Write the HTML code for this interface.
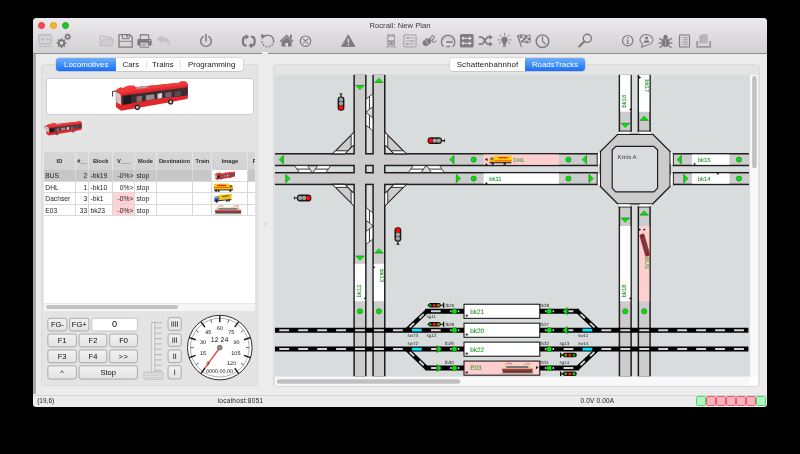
<!DOCTYPE html>
<html><head><meta charset="utf-8"><title>Rocrail: New Plan</title><style>
*{box-sizing:border-box;margin:0;padding:0}
html,body{width:800px;height:454px;background:#000;overflow:hidden}
body{font-family:"Liberation Sans",sans-serif;position:relative;color:#222}
.a{position:absolute}
svg text{text-rendering:geometricPrecision}
#root{left:0;top:0;width:800px;height:454px;will-change:transform}
#win{left:33px;top:18.3px;width:734px;height:388.3px;background:#ececec;border-radius:4px 4px 3px 3px;overflow:hidden}
#tbar{left:33px;top:18.3px;width:734px;height:35.9px;background:linear-gradient(#ebe9eb,#d2d0d2);border-bottom:1.5px solid #8e8e8e;border-radius:4px 4px 0 0}
#title{left:33px;width:734px;top:21.2px;text-align:center;font-size:7.7px;color:#3c3c3c}
.tl{width:7.4px;height:7.4px;border-radius:50%;top:21.9px}
#lstrip{left:33px;top:53.7px;width:2.6px;height:340px;background:#a9a9a9}
.gbox{background:#e4e4e4;border:0.8px solid #dadada;border-radius:3px}
.segbox{top:58.4px;height:12.6px;background:#fff;border-radius:3px;box-shadow:0 0 0 0.5px #c6c6c6, 0 0.6px 0.5px #b0b0b0}
.seg{height:12.6px;top:58.4px;font-size:7.9px;line-height:13.6px;text-align:center;color:#1a1a1a;white-space:nowrap}
.seg.sel{background:linear-gradient(#6cb0fc,#1a6ff6);color:#fff}
.seg.first{border-radius:3px 0 0 3px}
.seg.selr{border-radius:0 3px 3px 0}
.sdiv{top:60.4px;width:0.6px;height:8.6px;background:#e6e6e6}

#imgbox{left:45.6px;top:78.4px;width:208px;height:36.6px;background:#fff;border:0.7px solid #cdcdcd;border-radius:3px}
#tbl{left:44.3px;top:152.4px;width:211.2px;height:150.6px;background:#fff;overflow:hidden}
.th{top:0;height:18.1px;background:linear-gradient(#d7d7d7,#d2d2d2);font-size:5.7px;font-weight:bold;color:#2a2a2a;text-align:center;line-height:18.6px;border-right:0.8px solid #e4e4e4;overflow:hidden;white-space:nowrap}
.tr{left:0;width:211.2px;height:11.35px;border-bottom:0.6px solid #dadada}
.td{top:0;height:10.8px;font-size:6.7px;line-height:11.2px;color:#1c1c1c;white-space:nowrap;overflow:hidden;border-right:0.6px solid #d8d8d8}
.bt{text-align:center;color:#0c0c0c;white-space:nowrap}
.sb{background:#c2c2c2;border-radius:2.5px}
#status{left:33px;top:394.6px;width:734px;height:12px;border-top:0.7px solid #d4d4d4;font-size:6.4px;color:#222}
.led{top:396.1px;width:9.6px;height:9.5px;border-radius:1.6px}
</style></head><body><div id="root" class="a">
<div id="win" class="a"></div>
<div id="tbar" class="a"></div>
<div class="a tl" style="left:37.8px;background:#fc4a4e;border:0.4px solid #df3d40"></div>
<div class="a tl" style="left:49.6px;background:#fdb524;border:0.4px solid #de9b1c"></div>
<div class="a tl" style="left:61.5px;background:#28c231;border:0.4px solid #1da824"></div>
<div id="title" class="a">Rocrail: New Plan</div>
<div id="lstrip" class="a"></div>
<svg class="a" style="left:0;top:0" width="800" height="454" viewBox="0 0 800 454" fill="none" stroke-linecap="round" stroke-linejoin="round">
<rect x="38.9" y="34.7" width="12.4" height="9" rx="1" fill="#d6d4d6" stroke="#bebebe" stroke-width="1.4"/>
<path d="M39.2 46.7 H51 M45.1 44 V46.4" stroke="#bebebe" stroke-width="1.0"/>
<path d="M40.6 39.2 l2 -1.8 l1.5 1.8 l-1.5 1.8 z M46 39.2 l1.5 -1.8 l2 1.8 l-2 1.8 z" fill="#bcbcbc"/>
<polygon points="66.37,42.57 66.37,43.63 65.05,44.14 64.75,44.88 65.32,46.17 64.57,46.92 63.28,46.35 62.54,46.65 62.03,47.97 60.97,47.97 60.46,46.65 59.72,46.35 58.43,46.92 57.68,46.17 58.25,44.88 57.95,44.14 56.63,43.63 56.63,42.57 57.95,42.06 58.25,41.32 57.68,40.03 58.43,39.28 59.72,39.85 60.46,39.55 60.97,38.23 62.03,38.23 62.54,39.55 63.28,39.85 64.57,39.28 65.32,40.03 64.75,41.32 65.05,42.06" fill="#7c7c7c"/><circle cx="61.5" cy="43.1" r="1.75" fill="#e0dee0"/>
<polygon points="71.18,36.42 71.18,37.18 70.20,37.53 69.98,38.05 70.43,38.99 69.89,39.53 68.95,39.08 68.43,39.30 68.08,40.28 67.32,40.28 66.97,39.30 66.45,39.08 65.51,39.53 64.97,38.99 65.42,38.05 65.20,37.53 64.22,37.18 64.22,36.42 65.20,36.07 65.42,35.55 64.97,34.61 65.51,34.07 66.45,34.52 66.97,34.30 67.32,33.32 68.08,33.32 68.43,34.30 68.95,34.52 69.89,34.07 70.43,34.61 69.98,35.55 70.20,36.07" fill="#7c7c7c"/><circle cx="67.7" cy="36.8" r="1.15" fill="#e0dee0"/>
<path d="M100.3 45.6 V36.6 q0 -0.6 0.6 -0.6 h3.6 l1.2 1.5 h5.2 q0.6 0 0.6 0.6 v1.4" stroke="#c0c0c0" stroke-width="1.3"/>
<path d="M100.4 45.7 l2.4 -6 h10.8 l-2.4 6 z" fill="#d0ced0" stroke="#c0c0c0" stroke-width="1.3"/>
<path d="M119 34.6 h10.8 l2.4 2.4 v10 h-13.2 z" stroke="#7c7c7c" stroke-width="1.25"/>
<path d="M122.4 34.8 v3.9 h6.8 v-3.9" stroke="#7c7c7c" stroke-width="1.0"/><rect x="126.2" y="35" width="1.5" height="2.6" fill="#7c7c7c"/>
<path d="M119.3 41.3 h12.6" stroke="#7c7c7c" stroke-width="0.9"/>
<rect x="140.3" y="34.9" width="8.4" height="4.6" stroke="#7c7c7c" stroke-width="1.1"/>
<rect x="137.3" y="38.9" width="14.3" height="6.6" rx="1.2" fill="#7c7c7c"/>
<rect x="140.4" y="42.2" width="8.2" height="5.1" fill="#e0dee0" stroke="#7c7c7c" stroke-width="0.9"/>
<path d="M141.8 44 h5.2 M141.8 45.6 h3.6" stroke="#7c7c7c" stroke-width="0.7"/><circle cx="149.7" cy="40.6" r="0.7" fill="#e0dee0"/>
<path d="M156.6 38.6 l5.6 -3.7 v2.4 q8 0 8.4 8.9 q-2.4 -4.6 -8.4 -4.3 v2.4 z" fill="#c4c4c4"/>
<path d="M203.2 36.6 A5.3 5.3 0 1 0 208.8 36.6" stroke="#7c7c7c" stroke-width="1.45"/><path d="M206 34.4 V41" stroke="#7c7c7c" stroke-width="1.5"/>
<path d="M246.6 45.6 h-0.6 q-3 0 -3 -3 v-2.8 q0 -3 3 -3 h0.2" stroke="#7c7c7c" stroke-width="2.2" stroke-linecap="butt"/>
<path d="M251 36.8 h0.6 q3 0 3 3 v2.8 q0 3 -3 3 h-0.2" stroke="#7c7c7c" stroke-width="2.2" stroke-linecap="butt"/>
<path d="M245.6 33.9 l3.6 2.9 l-3.6 2.9 z M252 42.7 l-3.6 2.9 l3.6 2.9 z" fill="#7c7c7c"/>
<path d="M263.6 37 A5.8 5.8 0 0 1 273.6 41.2" stroke="#7c7c7c" stroke-width="1.4"/>
<path d="M273.6 41.2 A5.8 5.8 0 1 1 262.2 39.6" stroke="#7c7c7c" stroke-width="1.4" stroke-dasharray="1.8 1.4" stroke-linecap="butt"/>
<path d="M260.7 33.9 l5 1.5 l-3.9 3.9 z" fill="#7c7c7c"/>
<path d="M279.6 41.3 l7 -6.8 l7 6.8 l-0.9 0.9 l-6.1 -5.9 l-6.1 5.9 z" fill="#7c7c7c"/>
<path d="M281.6 41.6 l5 -4.8 l5 4.8 v5 h-10 z" fill="#7c7c7c"/><rect x="285.4" y="43" width="2.6" height="3.6" fill="#dcdadc"/>
<rect x="290" y="34.6" width="1.8" height="3.6" fill="#7c7c7c"/>
<circle cx="305.5" cy="41.2" r="5.2" stroke="#7c7c7c" stroke-width="1.2"/><path d="M303.5 39.2 l4 4 M307.5 39.2 l-4 4" stroke="#7c7c7c" stroke-width="1.2"/>
<path d="M348.4 35.2 l6.6 11.2 h-13.2 z" fill="#7c7c7c" stroke="#7c7c7c" stroke-width="0.9"/><path d="M348.4 38.8 v3.8" stroke="#e2e0e2" stroke-width="1.5" stroke-linecap="butt"/><circle cx="348.4" cy="44.6" r="0.85" fill="#e2e0e2"/>
<path d="M387.2 35.8 q0 -1.8 1.8 -1.8 h4.2 q1.8 0 1.8 1.8 v8.4 q0 1 -1 1 h-5.8 q-1 0 -1 -1 z" fill="#9b9b9b"/>
<rect x="388.3" y="36.6" width="5.6" height="3.6" rx="0.5" fill="#dedcde"/><circle cx="388.9" cy="43" r="0.7" fill="#dedcde"/><circle cx="393.3" cy="43" r="0.7" fill="#dedcde"/>
<path d="M388.4 45.4 l-1.8 2.3 M393.8 45.4 l1.8 2.3 M387.4 46.8 h7.4" stroke="#9b9b9b" stroke-width="0.9"/><rect x="389.4" y="34.4" width="3.4" height="0.9" fill="#dedcde"/>
<rect x="403.7" y="34.9" width="12.4" height="12" rx="1" stroke="#a2a2a2" stroke-width="1"/>
<path d="M405.6 37.9 h8.6" stroke="#a2a2a2" stroke-width="0.8"/><circle cx="408" cy="37.9" r="1" fill="#a2a2a2"/>
<path d="M405.6 40.9 h8.6" stroke="#a2a2a2" stroke-width="0.8"/><circle cx="411.6" cy="40.9" r="1" fill="#a2a2a2"/>
<path d="M405.6 43.9 h8.6" stroke="#a2a2a2" stroke-width="0.8"/><circle cx="407.4" cy="43.9" r="1" fill="#a2a2a2"/>
<ellipse cx="427" cy="42" rx="4.9" ry="3.4" transform="rotate(-35 427 42)" fill="#7c7c7c"/>
<path d="M424.6 39.4 l4.2 4.8 M427.6 38 l1 1.4" stroke="#dedcde" stroke-width="0.7"/>
<path d="M430.4 38.4 q1.2 -3.4 3.2 -2.4 q1.8 1.2 -0.6 3.2 q-1.8 1.8 0.2 2.8 q1.6 0.6 2.6 -1" stroke="#7c7c7c" stroke-width="1.05"/>
<path d="M443.2 46.4 A6.7 6.7 0 1 1 453 46.4" stroke="#7c7c7c" stroke-width="1.3"/>
<path d="M447.4 42 h5" stroke="#7c7c7c" stroke-width="1.3"/><circle cx="447.6" cy="42" r="1.1" fill="#7c7c7c"/><rect x="446.3" y="45.9" width="3.8" height="1.3" fill="#7c7c7c"/>
<path d="M443.42 39.30 L444.12 39.70" stroke="#7c7c7c" stroke-width="0.6"/>
<path d="M445.40 37.32 L445.80 38.02" stroke="#7c7c7c" stroke-width="0.6"/>
<path d="M448.10 36.60 L448.10 37.40" stroke="#7c7c7c" stroke-width="0.6"/>
<path d="M450.80 37.32 L450.40 38.02" stroke="#7c7c7c" stroke-width="0.6"/>
<path d="M452.78 39.30 L452.08 39.70" stroke="#7c7c7c" stroke-width="0.6"/>
<rect x="459.9" y="33.9" width="13.8" height="13.7" rx="1.6" fill="#808080"/>
<path d="M462.4 38.3 h8.6 M462.4 43.3 h8.6" stroke="#e4e2e4" stroke-width="1"/>
<rect x="461.9" y="37.2" width="2.2" height="2.2" fill="#e4e2e4"/><rect x="461.9" y="42.2" width="2.2" height="2.2" fill="#e4e2e4"/><path d="M469 36.4 l2.6 1.9 l-2.6 1.9 z M469 41.4 l2.6 1.9 l-2.6 1.9 z" fill="#e4e2e4"/>
<path d="M478.8 37.2 h2.2 q1.6 0 2.6 1.6 l2.4 3.8 q1 1.6 2.6 1.6 h1.4" stroke="#7c7c7c" stroke-width="1.75" stroke-linecap="butt"/>
<path d="M478.8 44.2 h2.2 q1.6 0 2.6 -1.6 l2.4 -3.8 q1 -1.6 2.6 -1.6 h1.4" stroke="#7c7c7c" stroke-width="1.75" stroke-linecap="butt"/>
<path d="M489.4 34.6 l3.4 2.6 l-3.4 2.6 z M489.4 41.6 l3.4 2.6 l-3.4 2.6 z" fill="#7c7c7c"/>
<circle cx="504.5" cy="39.9" r="3.1" fill="#7c7c7c"/><rect x="503" y="42.4" width="3" height="3.2" fill="#7c7c7c"/><path d="M503.2 46.6 h2.6" stroke="#7c7c7c" stroke-width="0.8"/>
<path d="M504.50 35.30 L504.50 33.30" stroke="#7c7c7c" stroke-width="0.85"/>
<path d="M507.75 36.65 L509.17 35.23" stroke="#7c7c7c" stroke-width="0.85"/>
<path d="M501.25 36.65 L499.83 35.23" stroke="#7c7c7c" stroke-width="0.85"/>
<path d="M509.10 39.90 L511.10 39.90" stroke="#7c7c7c" stroke-width="0.85"/>
<path d="M499.90 39.90 L497.90 39.90" stroke="#7c7c7c" stroke-width="0.85"/>
<path d="M508.27 42.54 L509.91 43.69" stroke="#7c7c7c" stroke-width="0.85"/>
<path d="M500.73 42.54 L499.09 43.69" stroke="#7c7c7c" stroke-width="0.85"/>
<path d="M517.6 35.6 l3.8 11.2" stroke="#7c7c7c" stroke-width="1.1"/>
<path d="M518.4 35.4 q3 -1.6 5.8 -0.2 q3 1.4 5.8 -0.4 l0.4 7 q-2.8 1.8 -5.8 0.4 q-2.8 -1.4 -4 0.2 z" stroke="#7c7c7c" stroke-width="0.9" fill="#dcdadc"/>
<path d="M519.4 35.8 l2.6 -0.8 l0.7 2.4 l-2.6 0.8 z M524.6 35.8 l2.6 0.2 l0.2 2.4 l-2.6 -0.2 z M522.8 37.6 l2.4 0.4 l0.4 2.4 l-2.4 -0.4 z M527.6 38.2 l2.4 -0.6 l0.2 2.4 l-2.4 0.6 z M521 40.4 l2.4 -0.6 l0.6 2.2 l-2.4 0.6 z M525.4 40.6 l2.4 0.4 l0.2 2 l-2.4 -0.4 z" fill="#7c7c7c"/>
<circle cx="542.5" cy="41.2" r="6.3" stroke="#7c7c7c" stroke-width="1.4"/><path d="M542.5 36.8 V41.4 L545.4 44" stroke="#7c7c7c" stroke-width="1.15"/>
<circle cx="587.3" cy="38.3" r="4.1" stroke="#7c7c7c" stroke-width="1.35"/><path d="M584.2 41.6 L579.2 46.4" stroke="#7c7c7c" stroke-width="2.1"/>
<circle cx="627.7" cy="40.7" r="5.2" stroke="#7c7c7c" stroke-width="1.2"/><path d="M627.7 40 v3.4" stroke="#7c7c7c" stroke-width="1.2" stroke-linecap="butt"/><circle cx="627.7" cy="38" r="0.8" fill="#7c7c7c"/><path d="M626.6 43.5 h2.2 M626.8 39.9 h0.9" stroke="#7c7c7c" stroke-width="0.6"/>
<path d="M642.6 44.2 A6.5 5.3 0 1 1 646 45.2 L641.6 47.2 Z" stroke="#7c7c7c" stroke-width="1.05" fill="#dedcde"/>
<circle cx="646.6" cy="38" r="1.6" fill="#7c7c7c"/><path d="M643.6 42.8 q0 -2.6 3 -2.6 q3 0 3 2.6 z" fill="#7c7c7c"/>
<ellipse cx="665.5" cy="42.4" rx="4" ry="4.6" fill="#7c7c7c"/><path d="M662.9 37.8 q2.6 -3.8 5.2 0 z" fill="#7c7c7c"/><circle cx="665.5" cy="36.6" r="1.9" fill="#7c7c7c"/>
<path d="M662.4 40.6 l-2.8 -2.2 M668.6 40.6 l2.8 -2.2 M662 43 h-3 M669 43 h3 M662.6 45.2 l-2.6 2.2 M668.4 45.2 l2.6 2.2 M665.5 39.6 v7" stroke="#7c7c7c" stroke-width="1.25"/>
<path d="M665.5 39.6 v7" stroke="#cfcdcf" stroke-width="0.5"/>
<rect x="679.5" y="35" width="10" height="12" rx="0.8" stroke="#7c7c7c" stroke-width="1.15"/>
<path d="M681.4 37.6 h0.8 M683.4 37.6 h4.2" stroke="#7c7c7c" stroke-width="0.75" stroke-linecap="butt"/>
<path d="M681.4 39.8 h0.8 M683.4 39.8 h4.2" stroke="#7c7c7c" stroke-width="0.75" stroke-linecap="butt"/>
<path d="M681.4 42 h0.8 M683.4 42 h4.2" stroke="#7c7c7c" stroke-width="0.75" stroke-linecap="butt"/>
<path d="M681.4 44.2 h0.8 M683.4 44.2 h4.2" stroke="#7c7c7c" stroke-width="0.75" stroke-linecap="butt"/>
<path d="M699.4 43.6 V36 l2.6 -1.8 h5.6 v9.4 z" fill="#b2b0b2"/><path d="M702 34.2 v9.4 M704 34.2 v9.4 M706 34.2 v9.4" stroke="#c8c6c8" stroke-width="0.5"/>
<path d="M697.2 41 v5.8 h13 v-5.8" stroke="#999" stroke-width="1.8" stroke-linecap="butt" stroke-linejoin="miter"/>
</svg>
<div class="a gbox" style="left:41.3px;top:64px;width:217px;height:321.5px"></div>
<div class="a gbox" style="left:273px;top:64px;width:487px;height:323px"></div>
<div class="a" style="left:263.5px;top:222.5px;width:2.6px;height:2.6px;border-radius:50%;background:#d6d6d6;border:0.4px solid #c4c4c4"></div>
<div class="a" style="left:262.3px;top:52.2px;width:5.5px;height:2px;background:#f4f4f4;border-radius:1px"></div>
<div class="a segbox" style="left:56.2px;width:187px"></div>
<div class="a seg sel first" style="left:56.2px;width:60px">Locomotives</div>
<div class="a seg " style="left:116.2px;width:29.3px">Cars</div>
<div class="a seg " style="left:145.5px;width:34.7px">Trains</div>
<div class="a seg " style="left:180.2px;width:63px">Programming</div>
<div class="a sdiv" style="left:145.5px"></div>
<div class="a sdiv" style="left:180.2px"></div>
<div class="a segbox" style="left:450px;width:135px"></div>
<div class="a seg " style="left:450px;width:75px"><span style="letter-spacing:0.13px">Schattenbahnhof</span></div>
<div class="a seg sel selr" style="left:525px;width:60px">RoadsTracks</div>
<div id="imgbox" class="a"></div>
<svg class="a" style="left:110.5px;top:81.2px" width="77.5" height="31" viewBox="0 0 100 40" >
<polygon points="6,12 12,8.5 16,9 22,6.2 30,6.2 31,8 88,2.2 90,0.8 96,0.6 98,2.4 99.5,5.5 99,23 76,27.5 30,35.5 13,38.5 6.5,34" fill="#e3262a"/>
<polygon points="6,12 12,8.5 16,9 22,6.2 30,6.2 31,8 88,2.2 90,0.8 96,0.6 98,2.4 99,5 60,9 30,13 13,16" fill="#ee3a3a"/>
<polygon points="33,7.6 47,6.2 47,8.8 33,10.2" fill="#b8a0a8"/>
<polygon points="14,18.6 99,8 99,18.6 62,22.6 30,28 14,31" fill="#3a2e33"/>
<polygon points="6.3,14 12.5,17.5 13,31 7,27.5" fill="#c8cdd2"/>
<polygon points="33,20 40,19 40,26 33,27" fill="#8a6a70"/>
<polygon points="45,18.5 56,17 56,23.5 45,25" fill="#9c8a90"/>
<polygon points="60,16.3 66,15.6 66,22 60,22.8" fill="#d8d4d8"/>
<polygon points="70,15 78,14 78,20.5 70,21.5" fill="#7a6066"/>
<polygon points="82,13.5 90,12.6 90,19 82,20" fill="#5a4a50"/>
<polygon points="16,20 26,18.5 26,29 16,30.8" fill="#1c1c20"/>
<circle cx="34" cy="34" r="3.6" fill="#26262a"/><circle cx="34" cy="34" r="1.8" fill="#c9c9cf"/>
<circle cx="77" cy="27" r="3.4" fill="#26262a"/><circle cx="77" cy="27" r="1.7" fill="#c9c9cf"/>
<path d="M6,13 L2,13.5 L2,20" stroke="#222" stroke-width="1.2" fill="none"/>
</svg>
<svg class="a" style="left:44px;top:121.2px" width="38" height="15.2" viewBox="0 0 100 40" >
<polygon points="6,12 12,8.5 16,9 22,6.2 30,6.2 31,8 88,2.2 90,0.8 96,0.6 98,2.4 99.5,5.5 99,23 76,27.5 30,35.5 13,38.5 6.5,34" fill="#e3262a"/>
<polygon points="6,12 12,8.5 16,9 22,6.2 30,6.2 31,8 88,2.2 90,0.8 96,0.6 98,2.4 99,5 60,9 30,13 13,16" fill="#ee3a3a"/>
<polygon points="33,7.6 47,6.2 47,8.8 33,10.2" fill="#b8a0a8"/>
<polygon points="14,18.6 99,8 99,18.6 62,22.6 30,28 14,31" fill="#4a3a40"/>
<polygon points="6.3,14 12.5,17.5 13,31 7,27.5" fill="#c8cdd2"/>
<polygon points="33,20 40,19 40,26 33,27" fill="#8a6a70"/>
<polygon points="45,18.5 56,17 56,23.5 45,25" fill="#9c8a90"/>
<polygon points="60,16.3 66,15.6 66,22 60,22.8" fill="#d8d4d8"/>
<polygon points="70,15 78,14 78,20.5 70,21.5" fill="#7a6066"/>
<polygon points="82,13.5 90,12.6 90,19 82,20" fill="#5a4a50"/>
<polygon points="16,20 26,18.5 26,29 16,30.8" fill="#1c1c20"/>
<circle cx="34" cy="34" r="3.6" fill="#26262a"/><circle cx="34" cy="34" r="1.8" fill="#c9c9cf"/>
<circle cx="77" cy="27" r="3.4" fill="#26262a"/><circle cx="77" cy="27" r="1.7" fill="#c9c9cf"/>
<path d="M6,13 L2,13.5 L2,20" stroke="#222" stroke-width="1.2" fill="none"/>
</svg>
<div id="tbl" class="a">
<div class="a th" style="left:0.0px;width:31.3px">ID</div>
<div class="a th" style="left:31.3px;width:13.9px">#__</div>
<div class="a th" style="left:45.2px;width:23.4px">Block</div>
<div class="a th" style="left:68.6px;width:22.6px">V___</div>
<div class="a th" style="left:91.2px;width:21.1px">Mode</div>
<div class="a th" style="left:112.3px;width:36.7px">Destination</div>
<div class="a th" style="left:149.0px;width:19.2px">Train</div>
<div class="a th" style="left:168.2px;width:35.9px">Image</div>
<div class="a th" style="left:204.1px;width:13.6px">R</div>
<div class="a tr" style="top:18.10px;background:#c7c7c7">
<div class="a td" style="left:0.0px;width:31.3px;padding-left:1px;border-right-color:#d6d6d6;">BUS</div>
<div class="a td" style="left:31.3px;width:13.9px;text-align:right;padding-right:1.2px;border-right-color:#d6d6d6;">2</div>
<div class="a td" style="left:45.2px;width:23.4px;padding-left:1px;border-right-color:#d6d6d6;">-bk19</div>
<div class="a td" style="left:68.6px;width:22.6px;text-align:right;padding-right:1.2px;border-right-color:#d6d6d6;">-0%&gt;</div>
<div class="a td" style="left:91.2px;width:21.1px;padding-left:1px;border-right-color:#d6d6d6;">stop</div>
<div class="a td" style="left:112.3px;width:36.7px;padding-left:1px;border-right-color:#d6d6d6;"></div>
<div class="a td" style="left:149.0px;width:19.2px;padding-left:1px;border-right-color:#d6d6d6;"></div>
<div class="a td" style="left:168.2px;width:35.9px;padding-left:1px;background:#fff;border-right-color:#d6d6d6;"></div>
<div class="a td" style="left:204.1px;width:13.6px;padding-left:1px;border-right-color:#d6d6d6;"></div>
</div>
<div class="a tr" style="top:29.45px;background:#fff">
<div class="a td" style="left:0.0px;width:31.3px;padding-left:1px;">DHL</div>
<div class="a td" style="left:31.3px;width:13.9px;text-align:right;padding-right:1.2px;">1</div>
<div class="a td" style="left:45.2px;width:23.4px;padding-left:1px;">-bk10</div>
<div class="a td" style="left:68.6px;width:22.6px;text-align:right;padding-right:1.2px;">0%&gt;</div>
<div class="a td" style="left:91.2px;width:21.1px;padding-left:1px;">stop</div>
<div class="a td" style="left:112.3px;width:36.7px;padding-left:1px;"></div>
<div class="a td" style="left:149.0px;width:19.2px;padding-left:1px;"></div>
<div class="a td" style="left:168.2px;width:35.9px;padding-left:1px;"></div>
<div class="a td" style="left:204.1px;width:13.6px;padding-left:1px;"></div>
</div>
<div class="a tr" style="top:40.80px;background:#fff">
<div class="a td" style="left:0.0px;width:31.3px;padding-left:1px;">Dachser</div>
<div class="a td" style="left:31.3px;width:13.9px;text-align:right;padding-right:1.2px;">3</div>
<div class="a td" style="left:45.2px;width:23.4px;padding-left:1px;">-bk1</div>
<div class="a td" style="left:68.6px;width:22.6px;text-align:right;padding-right:1.2px;background:#ffd2d6;">-0%&gt;</div>
<div class="a td" style="left:91.2px;width:21.1px;padding-left:1px;">stop</div>
<div class="a td" style="left:112.3px;width:36.7px;padding-left:1px;"></div>
<div class="a td" style="left:149.0px;width:19.2px;padding-left:1px;"></div>
<div class="a td" style="left:168.2px;width:35.9px;padding-left:1px;"></div>
<div class="a td" style="left:204.1px;width:13.6px;padding-left:1px;"></div>
</div>
<div class="a tr" style="top:52.15px;background:#fff">
<div class="a td" style="left:0.0px;width:31.3px;padding-left:1px;">E03</div>
<div class="a td" style="left:31.3px;width:13.9px;text-align:right;padding-right:1.2px;">33</div>
<div class="a td" style="left:45.2px;width:23.4px;padding-left:1px;">bk23</div>
<div class="a td" style="left:68.6px;width:22.6px;text-align:right;padding-right:1.2px;background:#ffd2d6;">-0%&gt;</div>
<div class="a td" style="left:91.2px;width:21.1px;padding-left:1px;">stop</div>
<div class="a td" style="left:112.3px;width:36.7px;padding-left:1px;"></div>
<div class="a td" style="left:149.0px;width:19.2px;padding-left:1px;"></div>
<div class="a td" style="left:168.2px;width:35.9px;padding-left:1px;"></div>
<div class="a td" style="left:204.1px;width:13.6px;padding-left:1px;"></div>
</div>
</div>
<svg class="a" style="left:213.6px;top:171.4px" width="21.5" height="9.6" viewBox="0 0 100 40" >
<polygon points="6,12 12,8.5 16,9 22,6.2 30,6.2 31,8 88,2.2 90,0.8 96,0.6 98,2.4 99.5,5.5 99,23 76,27.5 30,35.5 13,38.5 6.5,34" fill="#e3262a"/>
<polygon points="6,12 12,8.5 16,9 22,6.2 30,6.2 31,8 88,2.2 90,0.8 96,0.6 98,2.4 99,5 60,9 30,13 13,16" fill="#ee3a3a"/>
<polygon points="33,7.6 47,6.2 47,8.8 33,10.2" fill="#b8a0a8"/>
<polygon points="14,18.6 99,8 99,18.6 62,22.6 30,28 14,31" fill="#6a5258"/>
<polygon points="6.3,14 12.5,17.5 13,31 7,27.5" fill="#c8cdd2"/>
<polygon points="33,20 40,19 40,26 33,27" fill="#8a6a70"/>
<polygon points="45,18.5 56,17 56,23.5 45,25" fill="#9c8a90"/>
<polygon points="60,16.3 66,15.6 66,22 60,22.8" fill="#d8d4d8"/>
<polygon points="70,15 78,14 78,20.5 70,21.5" fill="#7a6066"/>
<polygon points="82,13.5 90,12.6 90,19 82,20" fill="#5a4a50"/>
<polygon points="16,20 26,18.5 26,29 16,30.8" fill="#1c1c20"/>
<circle cx="34" cy="34" r="3.6" fill="#26262a"/><circle cx="34" cy="34" r="1.8" fill="#c9c9cf"/>
<circle cx="77" cy="27" r="3.4" fill="#26262a"/><circle cx="77" cy="27" r="1.7" fill="#c9c9cf"/>
<path d="M6,13 L2,13.5 L2,20" stroke="#222" stroke-width="1.2" fill="none"/>
</svg>
<svg class="a" style="left:213.2px;top:182.6px;transform:scaleX(-1)" width="20.4" height="9.6" viewBox="0 0 40 18">
<rect x="9" y="1" width="29" height="11" fill="#ffc800"/>
<rect x="14" y="3.2" width="18" height="2.4" fill="#e2231a"/>
<rect x="9" y="8.2" width="29" height="1.3" fill="#e2231a"/>
<polygon points="1,6 3.5,3.2 9,3.2 9,14 1,14" fill="#f4b800"/>
<polygon points="2,6.5 4,4.2 7.5,4.2 7.5,8 2,8" fill="#5b6068"/>
<rect x="1" y="12" width="37" height="2.2" fill="#3a3a3a"/>
<circle cx="6" cy="15" r="2.2" fill="#222"/><circle cx="29" cy="15" r="2.2" fill="#222"/><circle cx="34" cy="15" r="2.2" fill="#222"/>
</svg>
<svg class="a" style="left:214px;top:193.2px" width="18.5" height="10.5" viewBox="0 0 40 20">
<polygon points="10,3 38,0.5 38,11 10,14" fill="#f5c400"/>
<rect x="18" y="4.3" width="14" height="2.2" fill="#2a4fa0" transform="rotate(-5 25 5)"/>
<polygon points="1,9 3,6 10,5.5 10,16 1,16.5" fill="#24449c"/>
<polygon points="2.2,9 3.6,7 8,6.7 8,10 2.2,10.4" fill="#9fb4d8"/>
<polygon points="1,15 38,11.5 38,13.5 1,17.5" fill="#333"/>
<circle cx="6" cy="17.3" r="2.2" fill="#1c1c1c"/><circle cx="28" cy="15.3" r="2.1" fill="#1c1c1c"/><circle cx="33" cy="14.8" r="2.1" fill="#1c1c1c"/>
</svg>
<svg class="a" style="left:214px;top:204.8px" width="28" height="10" viewBox="0 0 56 20">
<path d="M7,5 L12,1.2 L18,1.6 L15,4.6 M38,4.4 L43,1.6 L47,0.6 L49,2.6 L45,4.4" stroke="#d03a3a" stroke-width="1.0" fill="none"/>
<path d="M2,12 Q2,5.5 8,4.8 L48,4.4 Q54,5.2 54.5,12 L54.5,15 L2,15 Z" fill="#e6d6a4"/>
<rect x="2" y="10.6" width="52.5" height="3.6" fill="#a8323a"/>
<rect x="9" y="6.2" width="38" height="3.2" fill="#77727e"/>
<rect x="3" y="14.2" width="51" height="3" fill="#4a3a32"/>
<rect x="0" y="17.4" width="56" height="1.4" fill="#c4b4b0"/>
</svg>
<div class="a" style="left:44.3px;top:302.6px;width:211.2px;height:8.4px;background:#f5f5f5;border-top:0.6px solid #e8e8e8"></div>
<div class="a sb" style="left:46px;top:305px;width:131.6px;height:4.4px"></div>
<svg class="a" style="left:0;top:0" width="800" height="454" viewBox="0 0 800 454"><defs><linearGradient id="bg" x1="0" y1="0" x2="0" y2="1"><stop offset="0" stop-color="#f1f1f1"/><stop offset="1" stop-color="#e3e3e3"/></linearGradient></defs>
<rect x="47.85" y="318.25" width="19.10" height="12.70" rx="2.1" fill="url(#bg)" stroke="#969696" stroke-width="0.75"/>
<rect x="69.65" y="318.25" width="19.20" height="12.70" rx="2.1" fill="url(#bg)" stroke="#969696" stroke-width="0.75"/>
<rect x="91.85" y="318.25" width="45.6" height="12.7" rx="1.8" fill="#fff" stroke="#b2b2b2" stroke-width="0.7"/>
<rect x="47.85" y="334.05" width="28.50" height="12.80" rx="2.1" fill="url(#bg)" stroke="#969696" stroke-width="0.75"/>
<rect x="79.05" y="334.05" width="27.80" height="12.80" rx="2.1" fill="url(#bg)" stroke="#969696" stroke-width="0.75"/>
<rect x="109.65" y="334.05" width="27.80" height="12.80" rx="2.1" fill="url(#bg)" stroke="#969696" stroke-width="0.75"/>
<rect x="47.85" y="349.95" width="28.50" height="12.80" rx="2.1" fill="url(#bg)" stroke="#969696" stroke-width="0.75"/>
<rect x="79.05" y="349.95" width="27.80" height="12.80" rx="2.1" fill="url(#bg)" stroke="#969696" stroke-width="0.75"/>
<rect x="109.65" y="349.95" width="27.80" height="12.80" rx="2.1" fill="url(#bg)" stroke="#969696" stroke-width="0.75"/>
<rect x="47.85" y="365.85" width="28.50" height="13.20" rx="2.1" fill="url(#bg)" stroke="#969696" stroke-width="0.75"/>
<rect x="79.05" y="365.85" width="58.40" height="13.20" rx="2.1" fill="url(#bg)" stroke="#969696" stroke-width="0.75"/>
<rect x="168.05" y="317.65" width="13.20" height="12.80" rx="2.1" fill="url(#bg)" stroke="#969696" stroke-width="0.75"/>
<line x1="171.80" y1="321.35" x2="171.80" y2="326.75" stroke="#444" stroke-width="0.9"/>
<line x1="173.70" y1="321.35" x2="173.70" y2="326.75" stroke="#444" stroke-width="0.9"/>
<line x1="175.60" y1="321.35" x2="175.60" y2="326.75" stroke="#444" stroke-width="0.9"/>
<line x1="177.50" y1="321.35" x2="177.50" y2="326.75" stroke="#444" stroke-width="0.9"/>
<rect x="168.05" y="333.95" width="13.20" height="12.40" rx="2.1" fill="url(#bg)" stroke="#969696" stroke-width="0.75"/>
<line x1="172.75" y1="337.45" x2="172.75" y2="342.85" stroke="#444" stroke-width="0.9"/>
<line x1="174.65" y1="337.45" x2="174.65" y2="342.85" stroke="#444" stroke-width="0.9"/>
<line x1="176.55" y1="337.45" x2="176.55" y2="342.85" stroke="#444" stroke-width="0.9"/>
<rect x="168.05" y="349.95" width="13.20" height="12.70" rx="2.1" fill="url(#bg)" stroke="#969696" stroke-width="0.75"/>
<line x1="173.70" y1="353.60" x2="173.70" y2="359.00" stroke="#444" stroke-width="0.9"/>
<line x1="175.60" y1="353.60" x2="175.60" y2="359.00" stroke="#444" stroke-width="0.9"/>
<rect x="168.05" y="365.75" width="13.20" height="13.20" rx="2.1" fill="url(#bg)" stroke="#969696" stroke-width="0.75"/>
<line x1="174.65" y1="369.65" x2="174.65" y2="375.05" stroke="#444" stroke-width="0.9"/>
</svg>
<div class="a bt" style="left:47.5px;top:317.90px;width:19.8px;height:13.40px;line-height:13.20px;font-size:7.5px;">FG-</div>
<div class="a bt" style="left:69.3px;top:317.90px;width:19.9px;height:13.40px;line-height:13.20px;font-size:7.5px;">FG+</div>
<div class="a bt" style="left:91.5px;top:317.9px;width:46.3px;height:13.4px;line-height:13.6px;font-size:9.2px;color:#0a0a0a">0</div>
<div class="a bt" style="left:47.5px;top:333.70px;width:29.2px;height:13.50px;line-height:13.30px;font-size:7.5px;">F1</div>
<div class="a bt" style="left:78.7px;top:333.70px;width:28.5px;height:13.50px;line-height:13.30px;font-size:7.5px;">F2</div>
<div class="a bt" style="left:109.3px;top:333.70px;width:28.5px;height:13.50px;line-height:13.30px;font-size:7.5px;">F0</div>
<div class="a bt" style="left:47.5px;top:349.60px;width:29.2px;height:13.50px;line-height:13.30px;font-size:7.5px;">F3</div>
<div class="a bt" style="left:78.7px;top:349.60px;width:28.5px;height:13.50px;line-height:13.30px;font-size:7.5px;">F4</div>
<div class="a bt" style="left:109.3px;top:349.60px;width:28.5px;height:13.50px;line-height:13.30px;font-size:7.5px;letter-spacing:0.6px;">&gt;&gt;</div>
<div class="a bt" style="left:47.5px;top:365.50px;width:29.2px;height:13.90px;line-height:13.70px;font-size:7.5px;">^</div>
<div class="a bt" style="left:78.7px;top:365.50px;width:59.1px;height:13.90px;line-height:13.70px;font-size:7.5px;">Stop</div>
<svg class="a" style="left:0;top:0" width="800" height="454" viewBox="0 0 800 454">
<rect x="151.9" y="322.4" width="2.9" height="52" fill="#f6f6f6" stroke="#9a9a9a" stroke-width="0.65"/>
<line x1="154.9" y1="322.60" x2="161.8" y2="322.60" stroke="#a2a2a2" stroke-width="0.7"/>
<line x1="154.9" y1="327.93" x2="161.8" y2="327.93" stroke="#a2a2a2" stroke-width="0.7"/>
<line x1="154.9" y1="333.26" x2="161.8" y2="333.26" stroke="#a2a2a2" stroke-width="0.7"/>
<line x1="154.9" y1="338.59" x2="161.8" y2="338.59" stroke="#a2a2a2" stroke-width="0.7"/>
<line x1="154.9" y1="343.92" x2="161.8" y2="343.92" stroke="#a2a2a2" stroke-width="0.7"/>
<line x1="154.9" y1="349.25" x2="161.8" y2="349.25" stroke="#a2a2a2" stroke-width="0.7"/>
<line x1="154.9" y1="354.58" x2="161.8" y2="354.58" stroke="#a2a2a2" stroke-width="0.7"/>
<line x1="154.9" y1="359.91" x2="161.8" y2="359.91" stroke="#a2a2a2" stroke-width="0.7"/>
<line x1="154.9" y1="365.24" x2="161.8" y2="365.24" stroke="#a2a2a2" stroke-width="0.7"/>
<line x1="154.9" y1="370.57" x2="161.8" y2="370.57" stroke="#a2a2a2" stroke-width="0.7"/>
<rect x="144" y="372.2" width="18.8" height="7" rx="1" fill="#ebebeb" stroke="#9c9c9c" stroke-width="0.6"/>
<line x1="145" y1="374" x2="161.8" y2="374" stroke="#aaa" stroke-width="0.5"/>
<line x1="145" y1="375.7" x2="161.8" y2="375.7" stroke="#aaa" stroke-width="0.5"/>
<line x1="145" y1="377.4" x2="161.8" y2="377.4" stroke="#aaa" stroke-width="0.5"/>
</svg>
<svg class="a" style="left:0;top:0" width="800" height="454" viewBox="0 0 800 454">
<circle cx="219.8" cy="347.6" r="32.3" fill="#fff" stroke="#242424" stroke-width="0.95"/>
<circle cx="219.8" cy="347.6" r="29.4" fill="none" stroke="#8e8e8e" stroke-width="0.7"/>
<line x1="219.8" y1="347.6" x2="201.52" y2="372.76" stroke="#f21818" stroke-width="1.1"/>
<line x1="200.93" y1="373.57" x2="204.87" y2="368.15" stroke="#111" stroke-width="1.35"/>
<text x="207.99" y="365.19" font-size="5.5" text-anchor="middle" fill="#0e0e16" font-family="Liberation Sans">0</text>
<line x1="196.01" y1="364.88" x2="198.68" y2="362.94" stroke="#222" stroke-width="0.7"/>
<line x1="189.27" y1="357.52" x2="195.64" y2="355.45" stroke="#111" stroke-width="1.35"/>
<text x="202.97" y="354.97" font-size="5.5" text-anchor="middle" fill="#0e0e16" font-family="Liberation Sans">15</text>
<line x1="190.40" y1="347.60" x2="193.70" y2="347.60" stroke="#222" stroke-width="0.7"/>
<line x1="189.27" y1="337.68" x2="195.64" y2="339.75" stroke="#111" stroke-width="1.35"/>
<text x="202.97" y="344.03" font-size="5.5" text-anchor="middle" fill="#0e0e16" font-family="Liberation Sans">30</text>
<line x1="196.01" y1="330.32" x2="198.68" y2="332.26" stroke="#222" stroke-width="0.7"/>
<line x1="200.93" y1="321.63" x2="204.87" y2="327.05" stroke="#111" stroke-width="1.35"/>
<text x="208.22" y="333.56" font-size="5.5" text-anchor="middle" fill="#0e0e16" font-family="Liberation Sans">45</text>
<line x1="210.71" y1="319.64" x2="211.73" y2="322.78" stroke="#222" stroke-width="0.7"/>
<line x1="219.80" y1="315.50" x2="219.80" y2="322.20" stroke="#111" stroke-width="1.35"/>
<text x="219.80" y="329.60" font-size="5.5" text-anchor="middle" fill="#0e0e16" font-family="Liberation Sans">60</text>
<line x1="228.89" y1="319.64" x2="227.87" y2="322.78" stroke="#222" stroke-width="0.7"/>
<line x1="238.67" y1="321.63" x2="234.73" y2="327.05" stroke="#111" stroke-width="1.35"/>
<text x="231.38" y="333.56" font-size="5.5" text-anchor="middle" fill="#0e0e16" font-family="Liberation Sans">75</text>
<line x1="243.59" y1="330.32" x2="240.92" y2="332.26" stroke="#222" stroke-width="0.7"/>
<line x1="250.33" y1="337.68" x2="243.96" y2="339.75" stroke="#111" stroke-width="1.35"/>
<text x="236.63" y="344.03" font-size="5.5" text-anchor="middle" fill="#0e0e16" font-family="Liberation Sans">90</text>
<line x1="249.20" y1="347.60" x2="245.90" y2="347.60" stroke="#222" stroke-width="0.7"/>
<line x1="250.33" y1="357.52" x2="243.96" y2="355.45" stroke="#111" stroke-width="1.35"/>
<text x="235.87" y="354.72" font-size="5.5" text-anchor="middle" fill="#0e0e16" font-family="Liberation Sans">105</text>
<line x1="243.59" y1="364.88" x2="240.92" y2="362.94" stroke="#222" stroke-width="0.7"/>
<line x1="238.67" y1="373.57" x2="234.73" y2="368.15" stroke="#111" stroke-width="1.35"/>
<text x="231.61" y="365.19" font-size="5.5" text-anchor="middle" fill="#0e0e16" font-family="Liberation Sans">120</text>
<text x="219.60000000000002" y="342.20000000000005" font-size="7" text-anchor="middle" fill="#111" font-family="Liberation Sans">12 24</text>
<text x="219.60000000000002" y="372.8" font-size="5.4" text-anchor="middle" fill="#14141e" font-family="Liberation Sans">0000.00.00</text>
<circle cx="219.8" cy="347.6" r="2.4" fill="#8a8a8a" stroke="#444" stroke-width="0.6"/>
</svg>
<div class="a" style="left:274.75px;top:74.6px;width:483.3px;height:311.4px;background:#f8f8f8"></div>
<div class="a" style="left:750px;top:376.6px;width:8px;height:9.4px;background:#fff"></div>
<svg class="a" style="left:0;top:0" width="800" height="454" viewBox="0 0 800 454">
<defs><clipPath id="cv"><rect x="274.75" y="74.6" width="475.25" height="302.0"/></clipPath></defs>
<rect x="274.75" y="74.60" width="475.25" height="302.00" fill="#d9dcdc" />
<g clip-path="url(#cv)">
<rect x="353.37" y="74.60" width="13.20" height="302.00" fill="#1e1e1e" />
<rect x="372.32" y="74.60" width="13.20" height="302.00" fill="#1e1e1e" />
<rect x="618.67" y="74.60" width="13.20" height="57.00" fill="#1e1e1e" />
<rect x="637.62" y="74.60" width="13.20" height="57.00" fill="#1e1e1e" />
<rect x="618.67" y="206.50" width="13.20" height="170.10" fill="#1e1e1e" />
<rect x="637.62" y="206.50" width="13.20" height="170.10" fill="#1e1e1e" />
<rect x="274.75" y="153.03" width="322.95" height="13.20" fill="#1e1e1e" />
<rect x="274.75" y="171.97" width="322.95" height="13.20" fill="#1e1e1e" />
<rect x="672.80" y="153.03" width="76.20" height="13.20" fill="#1e1e1e" />
<rect x="672.80" y="171.97" width="76.20" height="13.20" fill="#1e1e1e" />
<rect x="354.87" y="74.60" width="10.20" height="302.00" fill="#cccccc" />
<rect x="373.82" y="74.60" width="10.20" height="302.00" fill="#cccccc" />
<rect x="620.17" y="74.60" width="10.20" height="57.00" fill="#cccccc" />
<rect x="639.12" y="74.60" width="10.20" height="57.00" fill="#cccccc" />
<rect x="620.17" y="206.50" width="10.20" height="170.10" fill="#cccccc" />
<rect x="639.12" y="206.50" width="10.20" height="170.10" fill="#cccccc" />
<rect x="274.75" y="154.53" width="322.95" height="10.20" fill="#cccccc" />
<rect x="274.75" y="173.47" width="322.95" height="10.20" fill="#cccccc" />
<rect x="672.80" y="154.53" width="76.20" height="10.20" fill="#cccccc" />
<rect x="672.80" y="173.47" width="76.20" height="10.20" fill="#cccccc" />
<rect x="618.67" y="130.60" width="13.20" height="1.00" fill="#1e1e1e" />
<rect x="618.67" y="206.50" width="13.20" height="1.00" fill="#1e1e1e" />
<rect x="637.62" y="130.60" width="13.20" height="1.00" fill="#1e1e1e" />
<rect x="637.62" y="206.50" width="13.20" height="1.00" fill="#1e1e1e" />
<rect x="596.70" y="153.03" width="1.00" height="13.20" fill="#1e1e1e" />
<rect x="672.80" y="153.03" width="1.00" height="13.20" fill="#1e1e1e" />
<rect x="596.70" y="171.97" width="1.00" height="13.20" fill="#1e1e1e" />
<rect x="672.80" y="171.97" width="1.00" height="13.20" fill="#1e1e1e" />
<polygon points="332.52,153.78 354.12,132.18 354.12,144.47 344.82,153.78" fill="#cccccc" stroke="#1e1e1e" stroke-width="1.1" stroke-linejoin="miter"/>
<polygon points="354.12,132.18 351.12,135.18 351.12,147.47 354.12,144.47" fill="#fff" stroke="#1e1e1e" stroke-width="0.9" />
<polygon points="332.52,153.78 335.52,150.78 347.82,150.78 344.82,153.78" fill="#fff" stroke="#1e1e1e" stroke-width="0.9" />
<polygon points="406.38,153.78 384.77,132.18 384.77,144.47 394.07,153.78" fill="#cccccc" stroke="#1e1e1e" stroke-width="1.1" stroke-linejoin="miter"/>
<polygon points="384.77,132.18 387.77,135.18 387.77,147.47 384.77,144.47" fill="#fff" stroke="#1e1e1e" stroke-width="0.9" />
<polygon points="406.38,153.78 403.38,150.78 391.07,150.78 394.07,153.78" fill="#fff" stroke="#1e1e1e" stroke-width="0.9" />
<polygon points="332.52,184.42 354.12,206.02 354.12,193.72 344.82,184.42" fill="#cccccc" stroke="#1e1e1e" stroke-width="1.1" stroke-linejoin="miter"/>
<polygon points="354.12,206.02 351.12,203.02 351.12,190.72 354.12,193.72" fill="#fff" stroke="#1e1e1e" stroke-width="0.9" />
<polygon points="332.52,184.42 335.52,187.42 347.82,187.42 344.82,184.42" fill="#fff" stroke="#1e1e1e" stroke-width="0.9" />
<polygon points="406.38,184.42 384.77,206.02 384.77,193.72 394.07,184.42" fill="#cccccc" stroke="#1e1e1e" stroke-width="1.1" stroke-linejoin="miter"/>
<polygon points="384.77,206.02 387.77,203.02 387.77,190.72 384.77,193.72" fill="#fff" stroke="#1e1e1e" stroke-width="0.9" />
<polygon points="406.38,184.42 403.38,187.42 391.07,187.42 394.07,184.42" fill="#fff" stroke="#1e1e1e" stroke-width="0.9" />
<polygon points="294.55,165.62 307.35,165.62 312.25,172.57 299.45,172.57" fill="#fff" stroke="#1e1e1e" stroke-width="0.8" />
<line x1="297.00" y1="169.10" x2="309.80" y2="169.10" stroke="#1e1e1e" stroke-width="0.9" />
<polygon points="330.65,165.62 317.85,165.62 312.95,172.57 325.75,172.57" fill="#fff" stroke="#1e1e1e" stroke-width="0.8" />
<line x1="328.20" y1="169.10" x2="315.40" y2="169.10" stroke="#1e1e1e" stroke-width="0.9" />
<polygon points="413.15,165.62 425.95,165.62 421.05,172.57 408.25,172.57" fill="#fff" stroke="#1e1e1e" stroke-width="0.8" />
<line x1="410.70" y1="169.10" x2="423.50" y2="169.10" stroke="#1e1e1e" stroke-width="0.9" />
<polygon points="439.45,165.62 426.65,165.62 431.55,172.57 444.35,172.57" fill="#fff" stroke="#1e1e1e" stroke-width="0.8" />
<line x1="441.90" y1="169.10" x2="429.10" y2="169.10" stroke="#1e1e1e" stroke-width="0.9" />
<polygon points="372.92,93.80 372.92,106.60 365.97,112.00 365.97,99.20" fill="#fff" stroke="#1e1e1e" stroke-width="0.8" />
<line x1="369.45" y1="96.50" x2="369.45" y2="109.30" stroke="#1e1e1e" stroke-width="0.9" />
<polygon points="372.92,130.70 372.92,117.90 365.97,112.50 365.97,125.30" fill="#fff" stroke="#1e1e1e" stroke-width="0.8" />
<line x1="369.45" y1="128.00" x2="369.45" y2="115.20" stroke="#1e1e1e" stroke-width="0.9" />
<polygon points="365.97,207.50 365.97,220.30 372.92,225.70 372.92,212.90" fill="#fff" stroke="#1e1e1e" stroke-width="0.8" />
<line x1="369.45" y1="210.20" x2="369.45" y2="223.00" stroke="#1e1e1e" stroke-width="0.9" />
<polygon points="365.97,244.40 365.97,231.60 372.92,226.20 372.92,239.00" fill="#fff" stroke="#1e1e1e" stroke-width="0.8" />
<line x1="369.45" y1="241.70" x2="369.45" y2="228.90" stroke="#1e1e1e" stroke-width="0.9" />
<polygon points="617.70,134.30 652.80,134.30 670.10,151.60 670.10,186.50 652.80,203.80 617.70,203.80 600.40,186.50 600.40,151.60" fill="#cccccc" stroke="#1e1e1e" stroke-width="1.3" stroke-linejoin="miter"/>
<polygon points="615.80,146.40 654.00,146.40 657.60,150.00 657.60,188.20 654.00,191.80 615.80,191.80 612.20,188.20 612.20,150.00" fill="#d9dcdc" stroke="#1e1e1e" stroke-width="1.2" stroke-linejoin="round"/>
<polygon points="619.67,131.70 630.67,131.70 629.38,133.80 617.48,133.80" fill="#fff" />
<polygon points="638.82,131.70 649.82,131.70 652.02,133.80 640.12,133.80" fill="#fff" />
<polygon points="619.67,206.40 630.67,206.40 629.38,204.30 617.48,204.30" fill="#fff" />
<polygon points="638.82,206.40 649.82,206.40 652.02,204.30 640.12,204.30" fill="#fff" />
<polygon points="597.80,154.03 597.80,165.03 599.90,163.72 599.90,151.82" fill="#fff" />
<polygon points="597.80,173.17 597.80,184.17 599.90,186.38 599.90,174.47" fill="#fff" />
<polygon points="672.70,154.03 672.70,165.03 670.60,163.72 670.60,151.82" fill="#fff" />
<polygon points="672.70,173.17 672.70,184.17 670.60,186.38 670.60,174.47" fill="#fff" />
<text x="617.60" y="159.40" font-size="6.0" fill="#3a3a3a" text-anchor="start" font-family="Liberation Sans" >Kreis A</text>
<rect x="483.55" y="154.53" width="75.40" height="10.20" fill="#ffcfd0" />
<rect x="483.55" y="173.47" width="75.40" height="10.20" fill="#fff" />
<rect x="692.00" y="154.53" width="37.50" height="10.20" fill="#fff" />
<rect x="692.00" y="173.47" width="37.50" height="10.20" fill="#fff" />
<rect x="620.17" y="74.60" width="10.20" height="37.15" fill="#fff" />
<rect x="639.12" y="74.60" width="10.20" height="37.15" fill="#fff" />
<rect x="354.87" y="263.85" width="10.20" height="37.40" fill="#fff" />
<rect x="373.82" y="263.85" width="10.20" height="37.40" fill="#fff" />
<rect x="620.17" y="225.95" width="10.20" height="75.30" fill="#fff" />
<rect x="639.12" y="225.95" width="10.20" height="75.30" fill="#ffcfd0" />
<text x="489.20" y="181.00" font-size="5.9" fill="#1f9628" text-anchor="start" font-family="Liberation Sans"  stroke="#1f9628" stroke-width="0.09">bk11</text>
<text x="513.20" y="162.00" font-size="5.9" fill="#4f9e3c" text-anchor="start" font-family="Liberation Sans"  stroke="#4f9e3c" stroke-width="0.09">DHL</text>
<text x="697.80" y="162.00" font-size="5.9" fill="#1f9628" text-anchor="start" font-family="Liberation Sans"  stroke="#1f9628" stroke-width="0.09">bk15</text>
<text x="697.80" y="180.90" font-size="5.9" fill="#1f9628" text-anchor="start" font-family="Liberation Sans"  stroke="#1f9628" stroke-width="0.09">bk14</text>
<polygon points="485.00,165.32 487.80,165.32 486.40,163.08" fill="#111" />
<polygon points="485.00,184.32 487.80,184.32 486.40,182.08" fill="#111" />
<polygon points="487.48,157.90 487.48,161.10 484.92,159.50" fill="#111" />
<line x1="693.40" y1="164.00" x2="695.80" y2="164.00" stroke="#111" stroke-width="0.7" /><line x1="694.60" y1="162.80" x2="694.60" y2="165.20" stroke="#111" stroke-width="0.7" />
<line x1="716.60" y1="173.60" x2="719.00" y2="173.60" stroke="#111" stroke-width="0.7" /><line x1="717.80" y1="172.40" x2="717.80" y2="174.80" stroke="#111" stroke-width="0.7" />
<text x="625.90" y="107.60" font-size="5.9" fill="#1f9628" text-anchor="start" font-family="Liberation Sans" transform="rotate(-90 625.90 107.60)"  stroke="#1f9628" stroke-width="0.09">bk16</text>
<text x="645.00" y="79.60" font-size="5.9" fill="#1f9628" text-anchor="start" font-family="Liberation Sans" transform="rotate(90 645.00 79.60)"  stroke="#1f9628" stroke-width="0.09">bk17</text>
<text x="360.60" y="297.20" font-size="5.9" fill="#1f9628" text-anchor="start" font-family="Liberation Sans" transform="rotate(-90 360.60 297.20)"  stroke="#1f9628" stroke-width="0.09">bk12</text>
<text x="379.60" y="269.20" font-size="5.9" fill="#1f9628" text-anchor="start" font-family="Liberation Sans" transform="rotate(90 379.60 269.20)"  stroke="#1f9628" stroke-width="0.09">bk13</text>
<text x="625.90" y="297.20" font-size="5.9" fill="#1f9628" text-anchor="start" font-family="Liberation Sans" transform="rotate(-90 625.90 297.20)"  stroke="#1f9628" stroke-width="0.09">bk18</text>
<text x="645.00" y="256.80" font-size="5.9" fill="#4f9e3c" text-anchor="start" font-family="Liberation Sans" transform="rotate(90 645.00 256.80)"  stroke="#4f9e3c" stroke-width="0.09">BUS</text>
<polygon points="631.24,108.10 631.24,110.70 629.16,109.40" fill="#111" />
<polygon points="638.88,76.00 638.88,78.80 641.12,77.40" fill="#111" />
<polygon points="365.74,296.90 365.74,299.50 363.66,298.20" fill="#111" />
<polygon points="373.26,266.00 373.26,268.60 375.34,267.30" fill="#111" />
<polygon points="631.04,297.10 631.04,299.70 628.96,298.40" fill="#111" />
<polygon points="638.96,228.30 638.96,230.90 641.04,229.60" fill="#111" />
<polygon points="643.00,230.24 645.60,230.24 644.30,228.16" fill="#111" />
<g transform="translate(489.2 155.6) scale(0.5750 0.5222)">
<rect x="9" y="0.5" width="30" height="12" fill="#ffce00"/>
<rect x="16" y="2.8" width="16" height="2.4" fill="#e2231a"/>
<rect x="9" y="8.4" width="30" height="0.8" fill="#e2231a"/><rect x="9" y="10.2" width="30" height="0.8" fill="#e2231a"/>
<polygon points="0.5,6 3,2.6 9,2.6 9,14 0.5,14" fill="#f0b400"/>
<polygon points="1.6,6.5 3.6,3.8 7.2,3.8 7.2,8 1.6,8" fill="#6b6f78"/>
<rect x="0.5" y="12.4" width="38" height="2.4" fill="#3a3a3a"/>
<circle cx="6" cy="15.4" r="2.3" fill="#222"/><circle cx="27" cy="15.4" r="2.3" fill="#222"/>
</g>
<g transform="translate(641.6 234.0) rotate(73.92)">
<rect x="0" y="-2.6" width="23.10" height="5.2" rx="1.2" fill="#cf2a30"/>
<rect x="1.2" y="-1.3" width="20.70" height="2.7" fill="#3a2e34"/>
<rect x="3" y="-0.5" width="17.10" height="0.9" fill="#7a6a70"/>
</g>
<polygon points="283.30,155.32 283.30,163.93 278.90,159.62" fill="#00e600" stroke="#178a1c" stroke-width="0.4" stroke-linejoin="round"/><line x1="283.30" y1="155.32" x2="283.30" y2="163.93" stroke="#33703a" stroke-width="0.5" />
<polygon points="453.85,155.32 453.85,163.93 449.45,159.62" fill="#00e600" stroke="#178a1c" stroke-width="0.4" stroke-linejoin="round"/><line x1="453.85" y1="155.32" x2="453.85" y2="163.93" stroke="#33703a" stroke-width="0.5" />
<polygon points="586.50,155.32 586.50,163.93 582.10,159.62" fill="#00e600" stroke="#178a1c" stroke-width="0.4" stroke-linejoin="round"/><line x1="586.50" y1="155.32" x2="586.50" y2="163.93" stroke="#33703a" stroke-width="0.5" />
<polygon points="681.25,155.32 681.25,163.93 676.85,159.62" fill="#00e600" stroke="#178a1c" stroke-width="0.4" stroke-linejoin="round"/><line x1="681.25" y1="155.32" x2="681.25" y2="163.93" stroke="#33703a" stroke-width="0.5" />
<polygon points="285.80,174.27 285.80,182.88 290.20,178.57" fill="#00e600" stroke="#178a1c" stroke-width="0.4" stroke-linejoin="round"/><line x1="285.80" y1="174.27" x2="285.80" y2="182.88" stroke="#33703a" stroke-width="0.5" />
<polygon points="456.35,174.27 456.35,182.88 460.75,178.57" fill="#00e600" stroke="#178a1c" stroke-width="0.4" stroke-linejoin="round"/><line x1="456.35" y1="174.27" x2="456.35" y2="182.88" stroke="#33703a" stroke-width="0.5" />
<polygon points="589.00,174.27 589.00,182.88 593.40,178.57" fill="#00e600" stroke="#178a1c" stroke-width="0.4" stroke-linejoin="round"/><line x1="589.00" y1="174.27" x2="589.00" y2="182.88" stroke="#33703a" stroke-width="0.5" />
<polygon points="683.75,174.27 683.75,182.88 688.15,178.57" fill="#00e600" stroke="#178a1c" stroke-width="0.4" stroke-linejoin="round"/><line x1="683.75" y1="174.27" x2="683.75" y2="182.88" stroke="#33703a" stroke-width="0.5" />
<polygon points="355.67,85.45 364.27,85.45 359.97,89.85" fill="#00e600" stroke="#178a1c" stroke-width="0.4" stroke-linejoin="round"/><line x1="355.67" y1="85.45" x2="364.27" y2="85.45" stroke="#33703a" stroke-width="0.5" />
<polygon points="355.67,256.00 364.27,256.00 359.97,260.40" fill="#00e600" stroke="#178a1c" stroke-width="0.4" stroke-linejoin="round"/><line x1="355.67" y1="256.00" x2="364.27" y2="256.00" stroke="#33703a" stroke-width="0.5" />
<polygon points="620.98,123.35 629.57,123.35 625.27,127.75" fill="#00e600" stroke="#178a1c" stroke-width="0.4" stroke-linejoin="round"/><line x1="620.98" y1="123.35" x2="629.57" y2="123.35" stroke="#33703a" stroke-width="0.5" />
<polygon points="620.98,218.10 629.57,218.10 625.27,222.50" fill="#00e600" stroke="#178a1c" stroke-width="0.4" stroke-linejoin="round"/><line x1="620.98" y1="218.10" x2="629.57" y2="218.10" stroke="#33703a" stroke-width="0.5" />
<polygon points="374.62,82.45 383.22,82.45 378.92,78.05" fill="#00e600" stroke="#178a1c" stroke-width="0.4" stroke-linejoin="round"/><line x1="374.62" y1="82.45" x2="383.22" y2="82.45" stroke="#33703a" stroke-width="0.5" />
<polygon points="374.62,253.00 383.22,253.00 378.92,248.60" fill="#00e600" stroke="#178a1c" stroke-width="0.4" stroke-linejoin="round"/><line x1="374.62" y1="253.00" x2="383.22" y2="253.00" stroke="#33703a" stroke-width="0.5" />
<polygon points="639.92,120.35 648.52,120.35 644.22,115.95" fill="#00e600" stroke="#178a1c" stroke-width="0.4" stroke-linejoin="round"/><line x1="639.92" y1="120.35" x2="648.52" y2="120.35" stroke="#33703a" stroke-width="0.5" />
<polygon points="639.92,215.10 648.52,215.10 644.22,210.70" fill="#00e600" stroke="#178a1c" stroke-width="0.4" stroke-linejoin="round"/><line x1="639.92" y1="215.10" x2="648.52" y2="215.10" stroke="#33703a" stroke-width="0.5" />
<circle cx="473.67" cy="159.62" r="2.6" fill="#00e600" stroke="#146b18" stroke-width="0.55"/>
<circle cx="473.67" cy="178.57" r="2.6" fill="#00e600" stroke="#146b18" stroke-width="0.55"/>
<circle cx="568.42" cy="159.62" r="2.6" fill="#00e600" stroke="#146b18" stroke-width="0.55"/>
<circle cx="568.42" cy="178.57" r="2.6" fill="#00e600" stroke="#146b18" stroke-width="0.55"/>
<circle cx="738.97" cy="159.62" r="2.6" fill="#00e600" stroke="#146b18" stroke-width="0.55"/>
<circle cx="738.97" cy="178.57" r="2.6" fill="#00e600" stroke="#146b18" stroke-width="0.55"/>
<circle cx="359.97" cy="311.23" r="2.6" fill="#00e600" stroke="#146b18" stroke-width="0.55"/>
<circle cx="378.92" cy="311.23" r="2.6" fill="#00e600" stroke="#146b18" stroke-width="0.55"/>
<circle cx="625.27" cy="311.23" r="2.6" fill="#00e600" stroke="#146b18" stroke-width="0.55"/>
<circle cx="644.22" cy="311.23" r="2.6" fill="#00e600" stroke="#146b18" stroke-width="0.55"/>
<g transform="translate(341.02 103.67) rotate(270)"><rect x="-7.20" y="-3.40" width="14.4" height="6.8" rx="3" fill="#161616"/><circle cx="4.00" cy="0" r="2.15" fill="#a2a2a2"/><circle cx="0.00" cy="0" r="2.15" fill="#a2a2a2"/><circle cx="-4.10" cy="0" r="2.35" fill="#ff0808"/><line x1="7.00" y1="0" x2="9.80" y2="0" stroke="#161616" stroke-width="1.2"/><polygon points="10.20,-2.1 10.20,2.1 8.80,0" fill="#161616"/></g>
<g transform="translate(434.77 140.68) rotate(0)"><rect x="-7.20" y="-3.40" width="14.4" height="6.8" rx="3" fill="#161616"/><circle cx="4.00" cy="0" r="2.15" fill="#a2a2a2"/><circle cx="0.00" cy="0" r="2.15" fill="#a2a2a2"/><circle cx="-4.10" cy="0" r="2.35" fill="#ff0808"/><line x1="7.00" y1="0" x2="9.80" y2="0" stroke="#161616" stroke-width="1.2"/><polygon points="10.20,-2.1 10.20,2.1 8.80,0" fill="#161616"/></g>
<g transform="translate(304.12 198.02) rotate(180)"><rect x="-7.20" y="-3.40" width="14.4" height="6.8" rx="3" fill="#161616"/><circle cx="4.00" cy="0" r="2.15" fill="#a2a2a2"/><circle cx="0.00" cy="0" r="2.15" fill="#a2a2a2"/><circle cx="-4.10" cy="0" r="2.35" fill="#ff0808"/><line x1="7.00" y1="0" x2="9.80" y2="0" stroke="#161616" stroke-width="1.2"/><polygon points="10.20,-2.1 10.20,2.1 8.80,0" fill="#161616"/></g>
<g transform="translate(397.88 234.52) rotate(90)"><rect x="-7.20" y="-3.40" width="14.4" height="6.8" rx="3" fill="#161616"/><circle cx="4.00" cy="0" r="2.15" fill="#a2a2a2"/><circle cx="0.00" cy="0" r="2.15" fill="#a2a2a2"/><circle cx="-4.10" cy="0" r="2.35" fill="#ff0808"/><line x1="7.00" y1="0" x2="9.80" y2="0" stroke="#161616" stroke-width="1.2"/><polygon points="10.20,-2.1 10.20,2.1 8.80,0" fill="#161616"/></g>
<line x1="274.75" y1="330.17" x2="748.40" y2="330.17" stroke="#000" stroke-width="5.0" />
<line x1="274.75" y1="349.12" x2="748.40" y2="349.12" stroke="#000" stroke-width="5.0" />
<line x1="425.10" y1="311.23" x2="579.10" y2="311.23" stroke="#000" stroke-width="5.0" />
<line x1="425.10" y1="368.07" x2="579.10" y2="368.07" stroke="#000" stroke-width="5.0" />
<line x1="406.75" y1="330.17" x2="426.70" y2="311.23" stroke="#000" stroke-width="4.4" stroke-linecap="butt"/>
<line x1="409.74" y1="327.33" x2="414.13" y2="323.16" stroke="#d4d4d4" stroke-width="1.9" />
<line x1="419.32" y1="318.24" x2="423.71" y2="314.07" stroke="#d4d4d4" stroke-width="1.9" />
<line x1="406.75" y1="349.12" x2="426.70" y2="368.07" stroke="#000" stroke-width="4.4" stroke-linecap="butt"/>
<line x1="409.74" y1="351.97" x2="414.13" y2="356.14" stroke="#d4d4d4" stroke-width="1.9" />
<line x1="419.32" y1="361.06" x2="423.71" y2="365.23" stroke="#d4d4d4" stroke-width="1.9" />
<line x1="577.50" y1="311.23" x2="597.45" y2="330.17" stroke="#000" stroke-width="4.4" stroke-linecap="butt"/>
<line x1="580.49" y1="314.07" x2="584.88" y2="318.24" stroke="#d4d4d4" stroke-width="1.9" />
<line x1="590.07" y1="323.16" x2="594.46" y2="327.33" stroke="#d4d4d4" stroke-width="1.9" />
<line x1="577.50" y1="368.07" x2="597.45" y2="349.12" stroke="#000" stroke-width="4.4" stroke-linecap="butt"/>
<line x1="580.49" y1="365.23" x2="584.88" y2="361.06" stroke="#d4d4d4" stroke-width="1.9" />
<line x1="590.07" y1="356.14" x2="594.46" y2="351.97" stroke="#d4d4d4" stroke-width="1.9" />
<line x1="279.30" y1="330.17" x2="289.10" y2="330.17" stroke="#d4d4d4" stroke-width="2.0" />
<line x1="279.30" y1="349.12" x2="289.10" y2="349.12" stroke="#d4d4d4" stroke-width="2.0" />
<line x1="298.25" y1="330.17" x2="308.05" y2="330.17" stroke="#d4d4d4" stroke-width="2.0" />
<line x1="298.25" y1="349.12" x2="308.05" y2="349.12" stroke="#d4d4d4" stroke-width="2.0" />
<line x1="317.20" y1="330.17" x2="327.00" y2="330.17" stroke="#d4d4d4" stroke-width="2.0" />
<line x1="317.20" y1="349.12" x2="327.00" y2="349.12" stroke="#d4d4d4" stroke-width="2.0" />
<line x1="336.15" y1="330.17" x2="345.95" y2="330.17" stroke="#d4d4d4" stroke-width="2.0" />
<line x1="336.15" y1="349.12" x2="345.95" y2="349.12" stroke="#d4d4d4" stroke-width="2.0" />
<line x1="355.10" y1="330.17" x2="364.90" y2="330.17" stroke="#d4d4d4" stroke-width="2.0" />
<line x1="355.10" y1="349.12" x2="364.90" y2="349.12" stroke="#d4d4d4" stroke-width="2.0" />
<line x1="374.05" y1="330.17" x2="383.85" y2="330.17" stroke="#d4d4d4" stroke-width="2.0" />
<line x1="374.05" y1="349.12" x2="383.85" y2="349.12" stroke="#d4d4d4" stroke-width="2.0" />
<line x1="393.00" y1="330.17" x2="402.80" y2="330.17" stroke="#d4d4d4" stroke-width="2.0" />
<line x1="393.00" y1="349.12" x2="402.80" y2="349.12" stroke="#d4d4d4" stroke-width="2.0" />
<line x1="601.45" y1="330.17" x2="611.25" y2="330.17" stroke="#d4d4d4" stroke-width="2.0" />
<line x1="601.45" y1="349.12" x2="611.25" y2="349.12" stroke="#d4d4d4" stroke-width="2.0" />
<line x1="620.40" y1="330.17" x2="630.20" y2="330.17" stroke="#d4d4d4" stroke-width="2.0" />
<line x1="620.40" y1="349.12" x2="630.20" y2="349.12" stroke="#d4d4d4" stroke-width="2.0" />
<line x1="639.35" y1="330.17" x2="649.15" y2="330.17" stroke="#d4d4d4" stroke-width="2.0" />
<line x1="639.35" y1="349.12" x2="649.15" y2="349.12" stroke="#d4d4d4" stroke-width="2.0" />
<line x1="658.30" y1="330.17" x2="668.10" y2="330.17" stroke="#d4d4d4" stroke-width="2.0" />
<line x1="658.30" y1="349.12" x2="668.10" y2="349.12" stroke="#d4d4d4" stroke-width="2.0" />
<line x1="677.25" y1="330.17" x2="687.05" y2="330.17" stroke="#d4d4d4" stroke-width="2.0" />
<line x1="677.25" y1="349.12" x2="687.05" y2="349.12" stroke="#d4d4d4" stroke-width="2.0" />
<line x1="696.20" y1="330.17" x2="706.00" y2="330.17" stroke="#d4d4d4" stroke-width="2.0" />
<line x1="696.20" y1="349.12" x2="706.00" y2="349.12" stroke="#d4d4d4" stroke-width="2.0" />
<line x1="715.15" y1="330.17" x2="724.95" y2="330.17" stroke="#d4d4d4" stroke-width="2.0" />
<line x1="715.15" y1="349.12" x2="724.95" y2="349.12" stroke="#d4d4d4" stroke-width="2.0" />
<line x1="734.10" y1="330.17" x2="743.90" y2="330.17" stroke="#d4d4d4" stroke-width="2.0" />
<line x1="734.10" y1="349.12" x2="743.90" y2="349.12" stroke="#d4d4d4" stroke-width="2.0" />
<line x1="411.95" y1="330.17" x2="421.75" y2="330.17" stroke="#00e8ff" stroke-width="2.7" />
<line x1="411.95" y1="349.12" x2="421.75" y2="349.12" stroke="#00e8ff" stroke-width="2.7" />
<line x1="582.50" y1="330.17" x2="592.30" y2="330.17" stroke="#00e8ff" stroke-width="2.7" />
<line x1="582.50" y1="349.12" x2="592.30" y2="349.12" stroke="#00e8ff" stroke-width="2.7" />
<line x1="430.90" y1="311.23" x2="440.70" y2="311.23" stroke="#d4d4d4" stroke-width="2.0" />
<line x1="430.90" y1="330.17" x2="440.70" y2="330.17" stroke="#d4d4d4" stroke-width="2.0" />
<line x1="431.10" y1="349.12" x2="436.70" y2="349.12" stroke="#d4d4d4" stroke-width="2.0" />
<line x1="431.10" y1="368.07" x2="436.70" y2="368.07" stroke="#d4d4d4" stroke-width="2.0" />
<line x1="568.35" y1="311.23" x2="573.35" y2="311.23" stroke="#d4d4d4" stroke-width="2.0" />
<line x1="568.35" y1="330.17" x2="573.35" y2="330.17" stroke="#d4d4d4" stroke-width="2.0" />
<line x1="563.55" y1="349.12" x2="573.35" y2="349.12" stroke="#d4d4d4" stroke-width="2.0" />
<line x1="563.55" y1="368.07" x2="573.35" y2="368.07" stroke="#d4d4d4" stroke-width="2.0" />
<line x1="450.15" y1="311.23" x2="451.75" y2="311.23" stroke="#d4d4d4" stroke-width="2.0" />
<line x1="457.75" y1="311.23" x2="459.35" y2="311.23" stroke="#d4d4d4" stroke-width="2.0" />
<line x1="450.15" y1="330.17" x2="451.75" y2="330.17" stroke="#d4d4d4" stroke-width="2.0" />
<line x1="457.75" y1="330.17" x2="459.35" y2="330.17" stroke="#d4d4d4" stroke-width="2.0" />
<line x1="450.15" y1="349.12" x2="451.75" y2="349.12" stroke="#d4d4d4" stroke-width="2.0" />
<line x1="457.75" y1="349.12" x2="459.35" y2="349.12" stroke="#d4d4d4" stroke-width="2.0" />
<line x1="450.15" y1="368.07" x2="451.75" y2="368.07" stroke="#d4d4d4" stroke-width="2.0" />
<line x1="457.75" y1="368.07" x2="459.35" y2="368.07" stroke="#d4d4d4" stroke-width="2.0" />
<line x1="544.90" y1="311.23" x2="546.50" y2="311.23" stroke="#d4d4d4" stroke-width="2.0" />
<line x1="552.50" y1="311.23" x2="554.10" y2="311.23" stroke="#d4d4d4" stroke-width="2.0" />
<line x1="544.90" y1="330.17" x2="546.50" y2="330.17" stroke="#d4d4d4" stroke-width="2.0" />
<line x1="552.50" y1="330.17" x2="554.10" y2="330.17" stroke="#d4d4d4" stroke-width="2.0" />
<line x1="544.90" y1="349.12" x2="546.50" y2="349.12" stroke="#d4d4d4" stroke-width="2.0" />
<line x1="552.50" y1="349.12" x2="554.10" y2="349.12" stroke="#d4d4d4" stroke-width="2.0" />
<line x1="544.90" y1="368.07" x2="546.50" y2="368.07" stroke="#d4d4d4" stroke-width="2.0" />
<line x1="552.50" y1="368.07" x2="554.10" y2="368.07" stroke="#d4d4d4" stroke-width="2.0" />
<polygon points="437.25,345.52 437.25,352.73 441.75,349.12" fill="#00e600" stroke="#178a1c" stroke-width="0.4" stroke-linejoin="round"/><line x1="437.25" y1="345.52" x2="437.25" y2="352.73" stroke="#33703a" stroke-width="0.5" />
<polygon points="437.25,364.47 437.25,371.67 441.75,368.07" fill="#00e600" stroke="#178a1c" stroke-width="0.4" stroke-linejoin="round"/><line x1="437.25" y1="364.47" x2="437.25" y2="371.67" stroke="#33703a" stroke-width="0.5" />
<polygon points="567.20,307.62 567.20,314.83 562.70,311.23" fill="#00e600" stroke="#178a1c" stroke-width="0.4" stroke-linejoin="round"/><line x1="567.20" y1="307.62" x2="567.20" y2="314.83" stroke="#33703a" stroke-width="0.5" />
<polygon points="567.20,326.57 567.20,333.77 562.70,330.17" fill="#00e600" stroke="#178a1c" stroke-width="0.4" stroke-linejoin="round"/><line x1="567.20" y1="326.57" x2="567.20" y2="333.77" stroke="#33703a" stroke-width="0.5" />
<circle cx="454.43" cy="311.23" r="2.5" fill="#00e600" stroke="#146b18" stroke-width="0.55"/>
<circle cx="454.43" cy="330.17" r="2.5" fill="#00e600" stroke="#146b18" stroke-width="0.55"/>
<circle cx="454.43" cy="349.12" r="2.5" fill="#00e600" stroke="#146b18" stroke-width="0.55"/>
<circle cx="454.43" cy="368.07" r="2.5" fill="#00e600" stroke="#146b18" stroke-width="0.55"/>
<circle cx="549.17" cy="311.23" r="2.5" fill="#00e600" stroke="#146b18" stroke-width="0.55"/>
<circle cx="549.17" cy="330.17" r="2.5" fill="#00e600" stroke="#146b18" stroke-width="0.55"/>
<circle cx="549.17" cy="349.12" r="2.5" fill="#00e600" stroke="#146b18" stroke-width="0.55"/>
<circle cx="549.17" cy="368.07" r="2.5" fill="#00e600" stroke="#146b18" stroke-width="0.55"/>
<rect x="464.00" y="304.23" width="75.80" height="14.1" fill="#fff" stroke="#0a0a0a" stroke-width="1.0"/>
<text x="470.20" y="313.62" font-size="6.4" fill="#1f9628" text-anchor="start" font-family="Liberation Sans"  stroke="#1f9628" stroke-width="0.09">bk21</text>
<line x1="465.30" y1="315.73" x2="468.30" y2="315.73" stroke="#111" stroke-width="0.7" /><line x1="466.80" y1="314.23" x2="466.80" y2="317.23" stroke="#111" stroke-width="0.7" />
<rect x="464.00" y="323.17" width="75.80" height="14.1" fill="#fff" stroke="#0a0a0a" stroke-width="1.0"/>
<text x="470.20" y="332.57" font-size="6.4" fill="#1f9628" text-anchor="start" font-family="Liberation Sans"  stroke="#1f9628" stroke-width="0.09">bk20</text>
<line x1="465.30" y1="334.67" x2="468.30" y2="334.67" stroke="#111" stroke-width="0.7" /><line x1="466.80" y1="333.17" x2="466.80" y2="336.17" stroke="#111" stroke-width="0.7" />
<rect x="464.00" y="342.12" width="75.80" height="14.1" fill="#fff" stroke="#0a0a0a" stroke-width="1.0"/>
<text x="470.20" y="351.52" font-size="6.4" fill="#1f9628" text-anchor="start" font-family="Liberation Sans"  stroke="#1f9628" stroke-width="0.09">bk22</text>
<line x1="465.30" y1="353.62" x2="468.30" y2="353.62" stroke="#111" stroke-width="0.7" /><line x1="466.80" y1="352.12" x2="466.80" y2="355.12" stroke="#111" stroke-width="0.7" />
<rect x="464.00" y="361.07" width="75.80" height="14.1" fill="#ffcfd0" stroke="#0a0a0a" stroke-width="1.0"/>
<text x="470.20" y="370.47" font-size="6.4" fill="#4f9e3c" text-anchor="start" font-family="Liberation Sans"  stroke="#4f9e3c" stroke-width="0.09">E03</text>
<line x1="465.30" y1="372.57" x2="468.30" y2="372.57" stroke="#111" stroke-width="0.7" /><line x1="466.80" y1="371.07" x2="466.80" y2="374.07" stroke="#111" stroke-width="0.7" />
<g transform="translate(501.0 362.3) scale(0.5821 0.6100)">
<path d="M7,5 L12,1.2 L18,1.6 L15,4.6 M40,4.4 L45,2 L50,2.6" stroke="#d03a3a" stroke-width="1.0" fill="none"/>
<path d="M2,12 Q2,5.5 8,4.8 L48,4.4 Q54,5.2 54.5,12 L54.5,15 L2,15 Z" fill="#e6d6a4"/>
<rect x="2" y="10.6" width="52.5" height="3.6" fill="#a8323a"/>
<rect x="9" y="6.2" width="38" height="3.2" fill="#77727e"/>
<rect x="3" y="14.2" width="51" height="3" fill="#4a3a32"/>
<rect x="0" y="17.4" width="56" height="1.4" fill="#b49a96"/>
</g>
<polygon points="535.92,365.97 535.92,369.17 538.48,367.57" fill="#111" />
<g transform="translate(427.30 305.23)"><line x1="13.4" y1="0" x2="16.2" y2="0" stroke="#0a0a0a" stroke-width="1.0"/><line x1="16.3" y1="-2.4" x2="16.3" y2="2.4" stroke="#0a0a0a" stroke-width="1.3"/><path d="M0,0 L2.4,-2.25 L11.399999999999999,-2.25 Q13.6,-2.25 13.6,0 Q13.6,2.25 11.399999999999999,2.25 L2.4,2.25 Z" fill="#0a0a0a"/><circle cx="2.90" cy="0" r="1.6" fill="#0a8a10"/><circle cx="7.00" cy="0" r="1.6" fill="#ff1010"/><circle cx="11.10" cy="0" r="1.6" fill="#80800a"/></g>
<g transform="translate(427.30 324.27)"><line x1="13.4" y1="0" x2="16.2" y2="0" stroke="#0a0a0a" stroke-width="1.0"/><line x1="16.3" y1="-2.4" x2="16.3" y2="2.4" stroke="#0a0a0a" stroke-width="1.3"/><path d="M0,0 L2.4,-2.25 L11.399999999999999,-2.25 Q13.6,-2.25 13.6,0 Q13.6,2.25 11.399999999999999,2.25 L2.4,2.25 Z" fill="#0a0a0a"/><circle cx="2.90" cy="0" r="1.6" fill="#0a8a10"/><circle cx="7.00" cy="0" r="1.6" fill="#ff1010"/><circle cx="11.10" cy="0" r="1.6" fill="#80800a"/></g>
<g transform="translate(560.00 355.12)"><line x1="0.65" y1="-2.4" x2="0.65" y2="2.4" stroke="#0a0a0a" stroke-width="1.3"/><line x1="0.6" y1="0" x2="3" y2="0" stroke="#0a0a0a" stroke-width="1.0"/><path d="M1.8,0 L4.2,-2.25 L14.600000000000001,-2.25 Q16.8,-2.25 16.8,0 Q16.8,2.25 14.600000000000001,2.25 L4.2,2.25 Z" fill="#0a0a0a"/><circle cx="5.70" cy="0" r="1.6" fill="#80800a"/><circle cx="9.80" cy="0" r="1.6" fill="#ff1010"/><circle cx="13.90" cy="0" r="1.6" fill="#0a8a10"/></g>
<g transform="translate(560.00 373.87)"><line x1="0.65" y1="-2.4" x2="0.65" y2="2.4" stroke="#0a0a0a" stroke-width="1.3"/><line x1="0.6" y1="0" x2="3" y2="0" stroke="#0a0a0a" stroke-width="1.0"/><path d="M1.8,0 L4.2,-2.25 L14.600000000000001,-2.25 Q16.8,-2.25 16.8,0 Q16.8,2.25 14.600000000000001,2.25 L4.2,2.25 Z" fill="#0a0a0a"/><circle cx="5.70" cy="0" r="1.6" fill="#80800a"/><circle cx="9.80" cy="0" r="1.6" fill="#ff1010"/><circle cx="13.90" cy="0" r="1.6" fill="#10c820"/></g>
<text x="407.40" y="337.40" font-size="4.5" fill="#262626" text-anchor="start" font-family="Liberation Sans" >sw73</text>
<text x="426.40" y="337.40" font-size="4.5" fill="#262626" text-anchor="start" font-family="Liberation Sans" >sg12</text>
<text x="426.40" y="318.20" font-size="4.5" fill="#262626" text-anchor="start" font-family="Liberation Sans" >sg11</text>
<text x="407.40" y="344.90" font-size="4.5" fill="#262626" text-anchor="start" font-family="Liberation Sans" >sw72</text>
<text x="445.60" y="306.60" font-size="4.5" fill="#262626" text-anchor="start" font-family="Liberation Sans" >fb25</text>
<text x="445.60" y="326.00" font-size="4.5" fill="#262626" text-anchor="start" font-family="Liberation Sans" >fb26</text>
<text x="445.00" y="344.90" font-size="4.5" fill="#262626" text-anchor="start" font-family="Liberation Sans" >fb29</text>
<text x="445.00" y="363.80" font-size="4.5" fill="#262626" text-anchor="start" font-family="Liberation Sans" >fb30</text>
<text x="540.30" y="306.60" font-size="4.5" fill="#262626" text-anchor="start" font-family="Liberation Sans" >fb28</text>
<text x="540.30" y="326.00" font-size="4.5" fill="#262626" text-anchor="start" font-family="Liberation Sans" >fb27</text>
<text x="540.30" y="344.90" font-size="4.5" fill="#262626" text-anchor="start" font-family="Liberation Sans" >fb32</text>
<text x="540.30" y="363.80" font-size="4.5" fill="#262626" text-anchor="start" font-family="Liberation Sans" >fb31</text>
<text x="559.40" y="344.90" font-size="4.5" fill="#262626" text-anchor="start" font-family="Liberation Sans" >sg13</text>
<text x="559.40" y="363.80" font-size="4.5" fill="#262626" text-anchor="start" font-family="Liberation Sans" >sg14</text>
<text x="578.00" y="337.40" font-size="4.5" fill="#262626" text-anchor="start" font-family="Liberation Sans" >sw11</text>
<text x="578.00" y="344.90" font-size="4.5" fill="#262626" text-anchor="start" font-family="Liberation Sans" >sw14</text>
</g>
<rect x="752.1" y="76.1" width="4.6" height="92.2" rx="2.3" fill="#c1c1c1"/>
<rect x="276.7" y="379.2" width="183.7" height="4.6" rx="2.3" fill="#c1c1c1"/>
</svg>
<div id="status" class="a"></div>
<div class="a" style="left:37.2px;top:396.8px;font-size:6.5px;color:#222">(19,6)</div>
<div class="a" style="left:217.6px;top:396.8px;font-size:6.5px;color:#222;letter-spacing:0.28px">localhost:8051</div>
<div class="a" style="left:580.4px;top:396.8px;font-size:6.5px;color:#222;letter-spacing:0.17px">0.0V 0.00A</div>
<div class="a led" style="left:696.10px;background:#b4f5c0;border:0.8px solid #4fd86a"></div>
<div class="a led" style="left:706.10px;background:#f7b4bc;border:0.8px solid #ee5a68"></div>
<div class="a led" style="left:716.10px;background:#f7b4bc;border:0.8px solid #ee5a68"></div>
<div class="a led" style="left:726.10px;background:#f7b4bc;border:0.8px solid #ee5a68"></div>
<div class="a led" style="left:736.10px;background:#f7b4bc;border:0.8px solid #ee5a68"></div>
<div class="a led" style="left:746.10px;background:#f7b4bc;border:0.8px solid #ee5a68"></div>
<div class="a led" style="left:756.10px;background:#b4f5c0;border:0.8px solid #4fd86a"></div>
</div></body></html>
